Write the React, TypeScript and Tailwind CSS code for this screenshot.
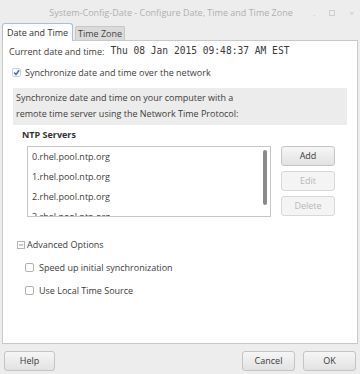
import React from "react";

const sans = { fontFamily: '"Open Sans", "Noto Sans", sans-serif' };
const mono = { fontFamily: '"DejaVu Sans Mono", "Liberation Mono", monospace' };

function Btn({ label, disabled, className = "" }: { label: string; disabled?: boolean; className?: string }) {
  return (
    <div
      className={`flex items-center justify-center rounded-[3px] border text-[9px] ${
        disabled
          ? "border-[#d8d8d8] bg-[#f4f4f4] text-[#b8b8b8]"
          : "border-[#c4c4c4] bg-gradient-to-b from-[#f6f6f6] to-[#e2e2e2] text-[#3a3a3a]"
      } ${className}`}
    >
      {label}
    </div>
  );
}

function Check({ checked }: { checked?: boolean }) {
  return (
    <div
      className={`flex h-[9px] w-[9px] items-center justify-center rounded-[2px] border ${
        checked ? "border-[#c8d4e2]" : "border-[#b0b0b0]"
      } bg-white`}
    >
      {checked && (
        <svg width="9" height="9" viewBox="0 0 9 9">
          <path d="M1.5 4.5 L3.8 7 L8 1.5" stroke="#4a6fa5" strokeWidth="2" fill="none" />
        </svg>
      )}
    </div>
  );
}

export default function App() {
  return (
    <div className="flex h-[374px] w-[360px] flex-col bg-[#ededed] text-[#3c3c3c]" style={sans}>
      {/* title bar */}
      <div className="relative flex h-[22px] items-center justify-center pt-[4px] text-[9px] text-[#b0b0b0]">
        <span className="-ml-[18px]">System-Config-Date - Configure Date, Time and Time Zone</span>
        <div className="absolute right-[6px] top-[7px] flex items-center gap-[14px] text-[8px] text-[#c8c8c8]">
          <span>.</span>
          <span className="h-[6px] w-[6px] border border-[#cfcfcf]" />
          <span>×</span>
        </div>
      </div>
      {/* tabs */}
      <div className="flex h-[18px] items-end pl-[2px]">
        <div className="relative z-10 -mb-px flex h-[18px] w-[71px] items-center justify-center rounded-t-[3px] border border-b-0 border-[#a9bfd6] bg-white text-[9px] text-[#333]">
          Date and Time
        </div>
        <div className="ml-[2px] flex h-[14px] w-[50px] items-center justify-center rounded-t-[2px] border border-b-0 border-[#c8c8c8] bg-[#dadada] text-[9px] text-[#444]">
          Time Zone
        </div>
      </div>
      {/* panel */}
      <div className="mx-[2px] flex h-[304px] flex-col border border-[#c9c9c9] bg-white">
        <div className="flex h-[20px] items-center pl-[6px] pt-[1px]">
          <span className="text-[9px] text-[#3c3c3c]">Current date and time:</span>
          <span className="ml-[6px] text-[9.6px] text-[#3a3a3a]" style={mono}>
            Thu 08 Jan 2015 09:48:37 AM EST
          </span>
        </div>
        <div className="mt-[5px] flex items-center gap-[4px] pl-[9px]">
          <Check checked />
          <span className="text-[9px]">Synchronize date and time over the network</span>
        </div>
        <div className="mx-[10px] mt-[8px] flex h-[37px] flex-col justify-center bg-[#ececec] pl-[3px] text-[9px] leading-[16px]">
          <span>Synchronize date and time on your computer with a</span>
          <span>remote time server using the Network Time Protocol:</span>
        </div>
        <div className="mt-[3px] pl-[19px] text-[9px] font-bold text-[#333]">NTP Servers</div>
        <div className="mt-[5px] flex pl-[24px]">
          <div className="relative h-[71px] w-[244px] overflow-hidden border border-[#c6c6c6] bg-white">
            <div className="flex flex-col pl-[4px] pt-[0px] text-[9px] leading-[20px] text-[#3c3c3c]">
              <span>0.rhel.pool.ntp.org</span>
              <span>1.rhel.pool.ntp.org</span>
              <span>2.rhel.pool.ntp.org</span>
              <span>3.rhel.pool.ntp.org</span>
            </div>
            <div className="absolute right-[3px] top-[3px] h-[55px] w-[4px] rounded-full bg-[#8a8a8a]" />
          </div>
          <div className="ml-[10px] flex flex-col gap-[5px]">
            <Btn label="Add" className="h-[20px] w-[54px]" />
            <Btn label="Edit" disabled className="h-[20px] w-[54px]" />
            <Btn label="Delete" disabled className="h-[20px] w-[54px]" />
          </div>
        </div>
        <div className="mt-[21px] flex items-center gap-[2px] pl-[14px] text-[9px]">
          <svg width="8" height="8" viewBox="0 0 8 8">
            <rect x="0.5" y="0.5" width="7" height="7" fill="none" stroke="#b5b5b5" />
            <path d="M2 4 H6" stroke="#999" />
          </svg>
          <span>Advanced Options</span>
        </div>
        <div className="mt-[9px] flex items-center gap-[5px] pl-[22px] text-[9px]">
          <Check />
          <span>Speed up initial synchronization</span>
        </div>
        <div className="mt-[10px] flex items-center gap-[5px] pl-[22px] text-[9px]">
          <Check />
          <span>Use Local Time Source</span>
        </div>
      </div>
      {/* bottom buttons */}
      <div className="flex items-center justify-between px-[4px] pt-[7px]">
        <Btn label="Help" className="h-[20px] w-[51px]" />
        <div className="flex gap-[8px]">
          <Btn label="Cancel" className="h-[20px] w-[53px]" />
          <Btn label="OK" className="h-[20px] w-[53px]" />
        </div>
      </div>
    </div>
  );
}
